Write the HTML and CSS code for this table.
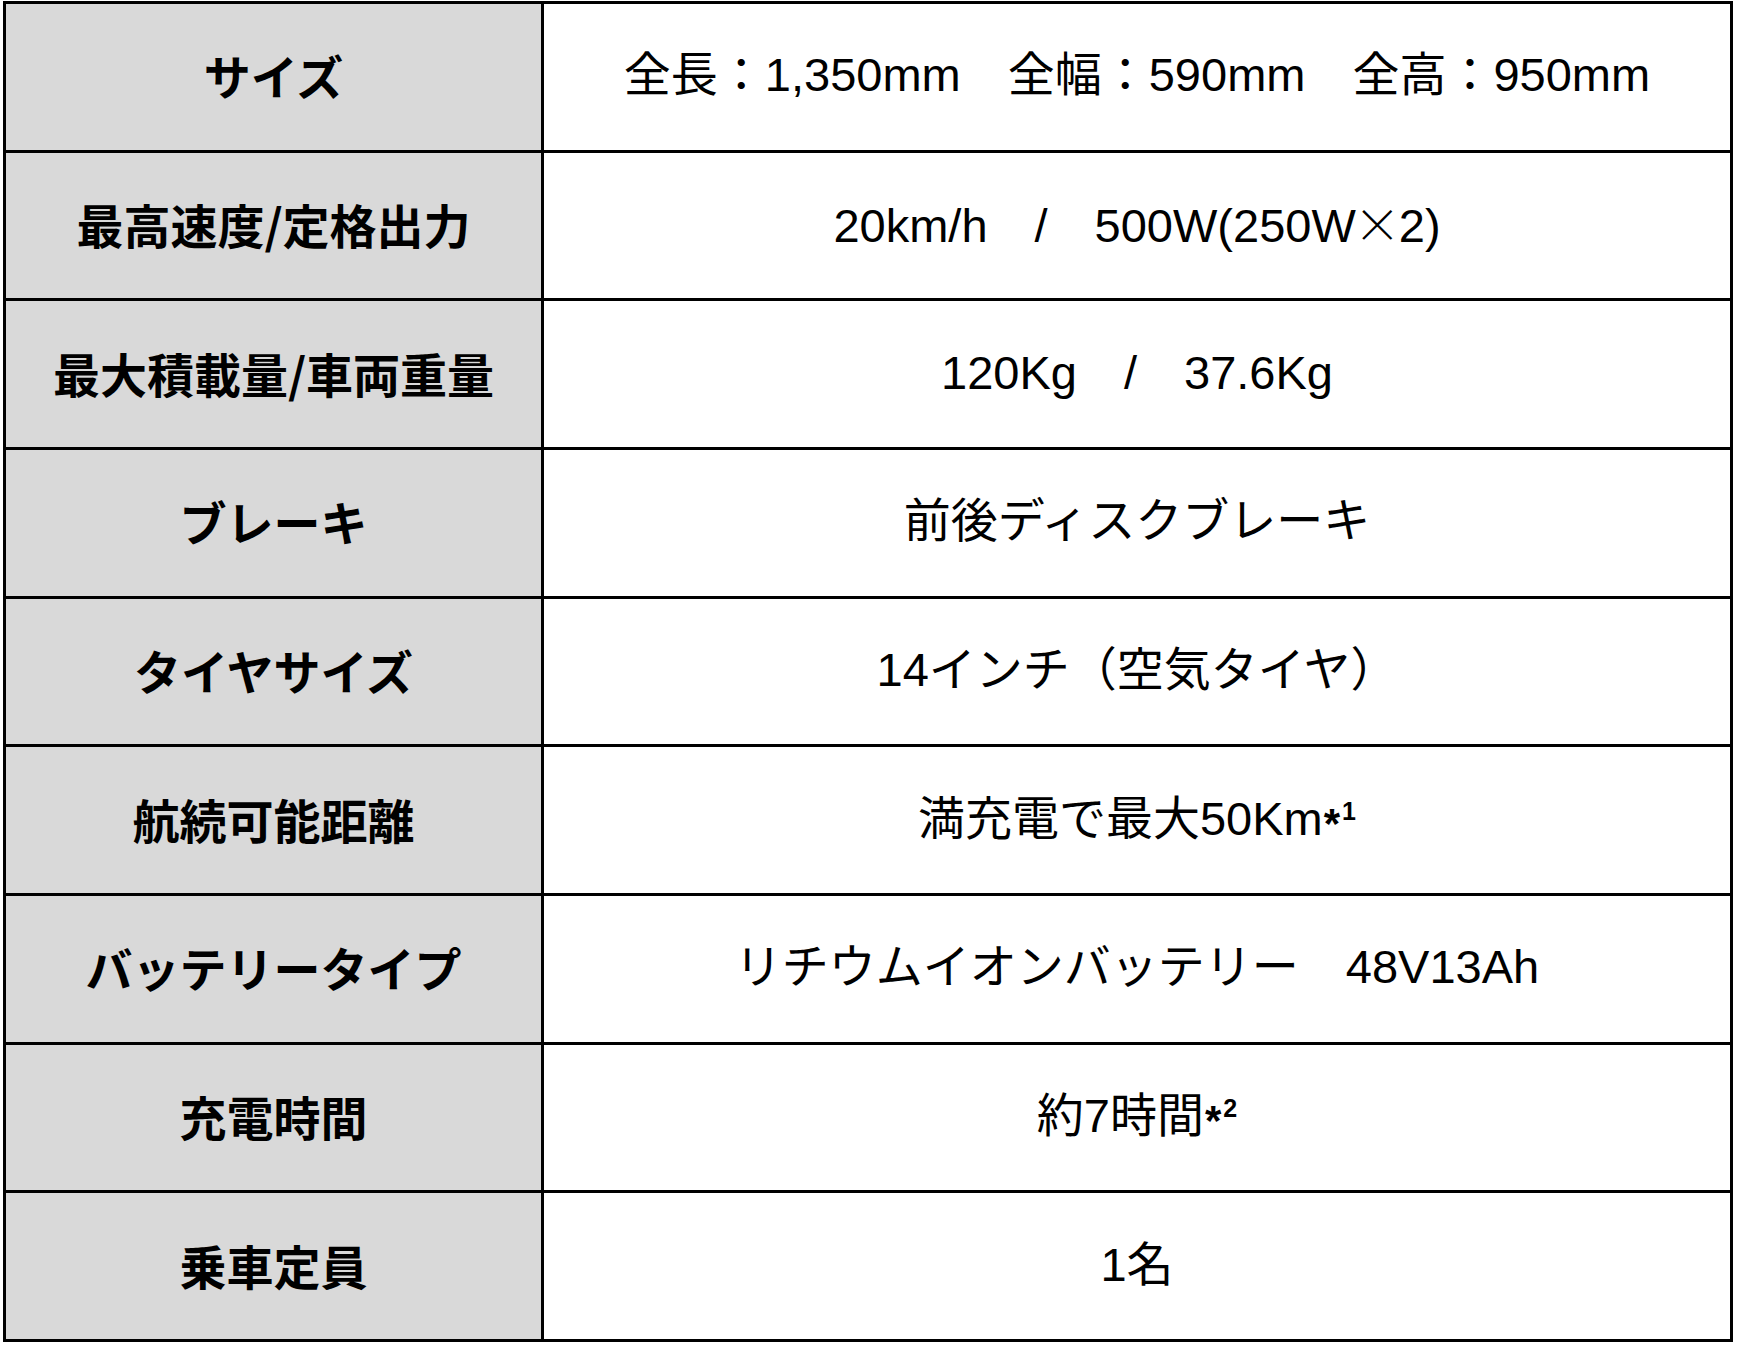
FILE: index.html
```html
<!DOCTYPE html>
<html lang="ja">
<head>
<meta charset="utf-8">
<title>仕様</title>
<link rel="stylesheet" href="styles.css">
</head>
<body>
<div class="spec">
  <div class="head">サイズ</div>
  <div class="val">全長：1,350mm　全幅：590mm　全高：950mm</div>
  <div class="head">最高速度/定格出力</div>
  <div class="val"><span class="txt">20km/h　/　500W(250W<span class="times">×</span>2)</span></div>
  <div class="head">最大積載量/車両重量</div>
  <div class="val">120Kg　/　37.6Kg</div>
  <div class="head">ブレーキ</div>
  <div class="val">前後ディスクブレーキ</div>
  <div class="head">タイヤサイズ</div>
  <div class="val">14インチ（空気タイヤ）</div>
  <div class="head">航続可能距離</div>
  <div class="val"><span class="txt">満充電で最大50Km<span class="ast">*</span><sup class="note">1</sup></span></div>
  <div class="head">バッテリータイプ</div>
  <div class="val">リチウムイオンバッテリー　48V13Ah</div>
  <div class="head">充電時間</div>
  <div class="val"><span class="txt">約7時間<span class="ast">*</span><sup class="note">2</sup></span></div>
  <div class="head">乗車定員</div>
  <div class="val">1名</div>
</div>
</body>
</html>
```

FILE: styles.css
```css
html, body {
  background: #ffffff;
}
body {
  margin: 0;
  padding: 1px 0 0 3px;
  font-family: "Liberation Sans", "Noto Sans CJK JP", sans-serif;
  color: #000;
}
.spec {
  box-sizing: border-box;
  width: 1730px;
  height: 1341px;
  display: grid;
  grid-template-columns: 535px 1fr;
  grid-template-rows: repeat(9, 1fr);
  gap: 3px;
  padding: 3px;
  background: #000;
}
.head, .val {
  display: flex;
  align-items: center;
  justify-content: center;
  font-size: 47px;
  line-height: 1;
  white-space: pre;
  padding-bottom: 4px;
}
.head {
  background: #d9d9d9;
  font-family: "Noto Sans CJK JP", sans-serif;
  font-weight: 700;
}
.val {
  background: #ffffff;
}
.txt {
  display: block;
  line-height: 1;
}
.times {
  font-family: "Noto Sans CJK JP", sans-serif;
  font-weight: 300;
  margin: 0 -2px;
}
.ast {
  font-weight: 700;
  font-size: 42px;
  vertical-align: -3px;
  line-height: 0;
  margin-left: 1px;
}
.note {
  font-size: 25px;
  font-weight: 700;
  line-height: 0;
  vertical-align: 15px;
  margin-left: 2px;
}
```
